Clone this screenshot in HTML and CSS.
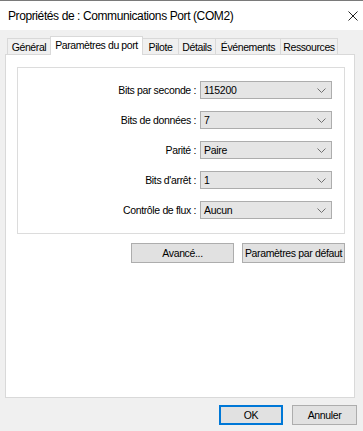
FILE: index.html
```html
<!DOCTYPE html>
<html>

<head>
    <title>Propriétés de : Communications Port (COM2)</title>
    <link rel="stylesheet" href="styles.css">
</head>

<body>
    <div class="window">
        <div class="titlebar">
            <span class="title">Propriétés de : Communications Port (COM2)</span>
            <svg class="close" width="10" height="10" viewBox="0 0 10 10">
                <path d="M0.5 0.5 L9.5 9.5 M9.5 0.5 L0.5 9.5" stroke="#222" stroke-width="1" fill="none" />
            </svg>
        </div>

        <div class="dialog">
            <div class="tabs">
                <div class="tab tab-general">Général</div>
                <div class="tab tab-port active">Paramètres du port</div>
                <div class="tab tab-pilote">Pilote</div>
                <div class="tab tab-details">Détails</div>
                <div class="tab tab-events">Événements</div>
                <div class="tab tab-res">Ressources</div>
            </div>

            <div class="panel">
                <div class="group">
                    <label class="field-label">Bits par seconde :</label>
                    <div class="combo"><span>115200</span><svg width="9" height="5" viewBox="0 0 9 5"><polyline points="0.5,0.5 4.5,4.5 8.5,0.5" fill="none" stroke="#707070" stroke-width="1" /></svg></div>

                    <label class="field-label">Bits de données :</label>
                    <div class="combo"><span>7</span><svg width="9" height="5" viewBox="0 0 9 5"><polyline points="0.5,0.5 4.5,4.5 8.5,0.5" fill="none" stroke="#707070" stroke-width="1" /></svg></div>

                    <label class="field-label">Parité :</label>
                    <div class="combo"><span>Paire</span><svg width="9" height="5" viewBox="0 0 9 5"><polyline points="0.5,0.5 4.5,4.5 8.5,0.5" fill="none" stroke="#707070" stroke-width="1" /></svg></div>

                    <label class="field-label">Bits d'arrêt :</label>
                    <div class="combo"><span>1</span><svg width="9" height="5" viewBox="0 0 9 5"><polyline points="0.5,0.5 4.5,4.5 8.5,0.5" fill="none" stroke="#707070" stroke-width="1" /></svg></div>

                    <label class="field-label">Contrôle de flux :</label>
                    <div class="combo"><span>Aucun</span><svg width="9" height="5" viewBox="0 0 9 5"><polyline points="0.5,0.5 4.5,4.5 8.5,0.5" fill="none" stroke="#707070" stroke-width="1" /></svg></div>
                </div>

                <div class="actions">
                    <button class="btn btn-wide">Avancé...</button>
                    <button class="btn btn-wide">Paramètres par défaut</button>
                </div>
            </div>

            <div class="footer">
                <button class="btn btn-ok">OK</button>
                <button class="btn btn-cancel">Annuler</button>
            </div>
        </div>
    </div>
</body>

</html>
```

FILE: styles.css
```css
body {
    margin: 0;
    font-family: "Liberation Sans", Arial, sans-serif;
    font-size: 10.5px;
    color: #000;
    background-color: #f0f0f0;
}

.window {
    width: 363px;
    height: 431px;
    box-sizing: border-box;
    border-top: 1px solid #7a7a7a;
    background-color: #f0f0f0;
    display: flex;
    flex-direction: column;
}

.titlebar {
    height: 29px;
    background-color: #fff;
    display: flex;
    align-items: center;
    justify-content: space-between;
    padding: 0 5px 0 8px;
}

.title {
    font-size: 12px;
    letter-spacing: -0.4px;
}

.dialog {
    flex: 1;
    padding: 6px 8px 0 5px;
    display: flex;
    flex-direction: column;
}

/* tabs */
.tabs {
    display: flex;
    align-items: flex-end;
    height: 18px;
    padding-left: 2px;
}

.tab {
    height: 16px;
    line-height: 16px;
    box-sizing: border-box;
    text-align: center;
    border: 1px solid #d9d9d9;
    border-bottom: none;
    border-right: none;
    background-color: #f0f0f0;
    letter-spacing: -0.4px;
    white-space: nowrap;
}

.tab-res {
    border-right: 1px solid #d9d9d9;
}

.tab-general { width: 43px; }
.tab-port { width: 93px; }
.tab-pilote { width: 35px; }
.tab-details { width: 37px; }
.tab-events { width: 65px; }
.tab-res { width: 58px; }

.tab.active {
    height: 19px;
    line-height: 16px;
    background-color: #fff;
    border-right: 1px solid #d9d9d9;
    margin-bottom: -1px;
    position: relative;
    z-index: 1;
}

.tab.active + .tab {
    border-left: none;
}

.panel {
    height: 344px;
    box-sizing: border-box;
    background-color: #fff;
    border: 1px solid #d9d9d9;
    padding: 12px 9px 0 11px;
}

/* group of combos */
.group {
    border: 1px solid #dcdcdc;
    display: grid;
    grid-template-columns: 1fr 132px;
    column-gap: 4px;
    row-gap: 12px;
    padding: 13px 12px 14px 0;
    align-items: center;
}

.field-label {
    text-align: right;
    letter-spacing: -0.35px;
    white-space: nowrap;
}

.combo {
    height: 18px;
    box-sizing: border-box;
    background-color: #e5e5e5;
    border: 1px solid #adadad;
    display: flex;
    align-items: center;
    justify-content: space-between;
    padding: 0 5px 0 3px;
    letter-spacing: -0.3px;
}

.actions {
    display: flex;
    justify-content: flex-end;
    gap: 8px;
    margin-top: 9px;
}

.btn {
    font-family: "Liberation Sans", Arial, sans-serif;
    font-size: 10.5px;
    letter-spacing: -0.35px;
    white-space: nowrap;
    color: #000;
    background-color: #e1e1e1;
    border: 1px solid #adadad;
    height: 20px;
    padding: 0;
    margin: 0;
}

.btn-wide {
    width: 103px;
}

.footer {
    display: flex;
    justify-content: flex-end;
    gap: 9px;
    margin-top: 7px;
    margin-right: -2px;
}

.btn-ok {
    width: 64px;
    border: 1px solid #0078d7;
    box-shadow: inset 0 0 0 1px #0078d7;
}

.btn-cancel {
    width: 65px;
}
```
